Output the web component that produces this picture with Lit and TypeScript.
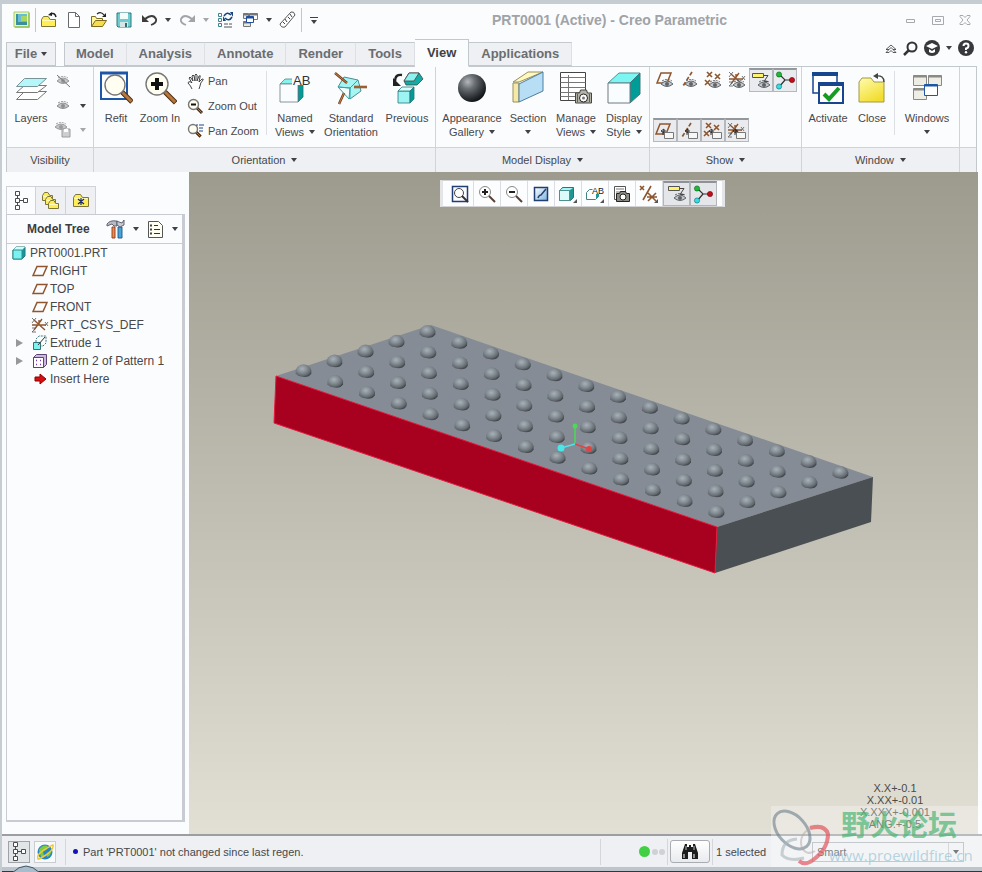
import { LitElement, html, svg, css, nothing, TemplateResult } from "lit";
import { customElement, property, state } from "lit/decorators.js";
import { classMap } from "lit/directives/class-map.js";

type Shape = unknown;
interface Icon { w: number; h: number; body: Shape; }

const icon = (w: number, h: number, body: Shape): Icon => ({ w, h, body });
const draw = (i: Icon) =>
  html`<svg width=${i.w} height=${i.h} viewBox="0 0 ${i.w} ${i.h}" fill="none" aria-hidden="true">${i.body}</svg>`;

const folder = (x: number, y: number, w: number, h: number) => svg`
  <path d="M${x} ${y + h}V${y + 3}l2 -3h${w / 3}l2 3h${w - w / 3 - 4}v${h - 3}z" fill="#ffee55" stroke="#7d7638"/>
  <path d="M${x + 1} ${y + 4}h${w - 2}" stroke="#fffcc0"/>`;
const eye = (x: number, y: number, c = "#606468") => svg`
  <path d="M${x} ${y + 4}q6 -6 12 0q-6 5 -12 0z" fill="#c3c7ca" stroke="${c}"/>
  <circle cx=${x + 6} cy=${y + 4} r="2" fill="${c}"/>
  <path d="M${x + 1} ${y + 1}q5 -3 10 0" stroke="${c}" stroke-dasharray="2 1"/>`;
const brown = "#8e552e";
const plane = svg`<path d="M5 2h10l-4 10H1z" stroke=${brown} stroke-width="1.5"/>`;
const axis = svg`<path d="M12 1L3 15" stroke=${brown} stroke-width="1.7" stroke-dasharray="4 2"/>`;
const points = svg`<path d="M1 9l5 5m0 -5l-5 5M3 1l5 5m0 -5l-5 5M11 3l5 5m0 -5l-5 5" stroke=${brown} stroke-width="1.6"/>`;
const csys = svg`<path d="M1 8h14M3 3l11 10M3 13L11 2M8 8V3" stroke=${brown} stroke-width="1.4"/>
  <path d="M1 1l2 2m2 -2l-4 5M1 11h4l-4 4h4M14 5l3 4m0 -4l-3 4" stroke="#666" stroke-width="0.9"/>`;
const tagBox = svg`<path d="M9.5 10.500h9v6h-9z" fill="#f7f7f7" stroke="#777"/><path d="M8 13V9h3M6 9l3 -2v4z" stroke="#222" stroke-width="0.9"/>`;
const note = svg`<path d="M0.5 1.500h11v4h-11z" fill="#fff36b" stroke="#555"/><path d="M12 3.500h4l-4 6h4" stroke="#444"/>`;
const spin = svg`<path d="M4 3l6 6h8M10 9l-6 7" stroke="#333" stroke-width="1.2"/>
  <circle cx="4" cy="3.5" r="2.6" fill="#1cbb35" stroke="#0b5c1a" stroke-width="0.6"/>
  <circle cx="17" cy="9" r="2.6" fill="#c50d1a" stroke="#650308" stroke-width="0.6"/>
  <circle cx="4" cy="15.5" r="2.6" fill="#35dce2" stroke="#0a6b72" stroke-width="0.6"/>`;
const cube = (x: number, y: number, s: number, d: number) => svg`
  <path d="M${x} ${y + d}l${d} ${-d}h${s}l${-d} ${d}z" fill="#86f3ef" stroke="#4a8c92" stroke-width="0.8"/>
  <path d="M${x + s} ${y + d}l${d} ${-d}v${s}l${-d} ${d}z" fill="#009c98" stroke="#2c6f73" stroke-width="0.8"/>
  <path d="M${x} ${y + d}h${s}v${s}h${-s}z" fill="#fafdff" stroke="#6c7b80" stroke-width="0.8"/>`;
const camera = (x: number, y: number) => svg`
  <path d="M${x} ${y + 3}h4l1 -3h6l1 3h4v10h-16z" fill="#b4b3a8" stroke="#444"/>
  <path d="M${x + 2} ${y + 4}v8M${x + 14} ${y + 4}v8" stroke="#5f5f58"/>
  <circle cx=${x + 8} cy=${y + 8} r="4" fill="#fff" stroke="#222"/><circle cx=${x + 8} cy=${y + 8} r="1.5" fill="#777"/>`;
const lens = (x: number, y: number, r: number, hw: number) => svg`
  <path d="M${x + r * 0.7} ${y + r * 0.7}l${r} ${r}" stroke="#4c2b10" stroke-width=${hw + 1}/>
  <path d="M${x + r * 0.75} ${y + r * 0.75}l${r * 0.9} ${r * 0.9}" stroke="#b8783d" stroke-width=${hw - 1}/>
  <circle cx=${x} cy=${y} r=${r} fill="#fffef0" stroke="#777" stroke-width="1.4"/>`;
const pane = (x: number, y: number, w: number, h: number, c: string, f: string) => svg`
  <path d="M${x} ${y}h${w}v${h}h${-w}z" fill=${f} stroke=${c}/><path d="M${x} ${y + 1}h${w}" stroke=${c} stroke-width="2"/>`;

const I: Record<string, Icon> = {
  logo: icon(18, 18, svg`<path d="M1 1h15v15H1z" fill="#e8f4c8" stroke="#a5cf5a"/><path d="M3 3h11v11H3z" fill="#3a8f9b"/><path d="M5 3h9v8H5z" fill="#67bcd7"/><path d="M8 5h6v5H8z" fill="#a9d65e"/><path d="M16 2v14H2" stroke="#93c25a" stroke-width="1.5"/>`),
  closeFolder: icon(18, 18, svg`${folder(1.5, 5.5, 14, 10)}<path d="M16 6q-1 -5 -6 -3" stroke="#222" stroke-width="1.5"/><path d="M8 4l4 -3v4z" fill="#222"/>`),
  fresh: icon(14, 18, svg`<path d="M1.500 1.500h7l4 4v11h-11z" fill="#fff" stroke="#6a6a6a"/><path d="M8.500 1.500v4h4" stroke="#6a6a6a"/>`),
  open: icon(18, 18, svg`<path d="M1.500 15.500v-10h4l1 2h6v3" fill="#fff6a0" stroke="#7d6a20"/><path d="M1.500 15.500l4 -6h11l-4 6z" fill="#f7dd49" stroke="#7d6a20"/><path d="M7 3q4 -3 7 1" stroke="#222" stroke-width="1.200"/><path d="M16 2v4h-4z" fill="#222"/>`),
  save: icon(16, 16, svg`<path d="M1 1h14v14H2l-1 -1z" fill="#6fcdd0" stroke="#2d7b80"/><path d="M4 1h8v6H4z" fill="#f4fbfb"/><path d="M4 10h8v5H4z" fill="#d6e6e7"/><path d="M9 11h2v4H9z" fill="#2b6f74"/>`),
  undo: icon(17, 12, svg`<path d="M4 5q8 -6 11 0q1 4 -5 6" stroke="#3d3d3d" stroke-width="1.800"/><path d="M1 1v7h7z" fill="#3d3d3d"/>`),
  redo: icon(17, 12, svg`<path d="M13 5q-8 -6 -11 0q-1 4 5 6" stroke="#a2a5a8" stroke-width="1.800"/><path d="M16 1v7H9z" fill="#a2a5a8"/>`),
  regen: icon(17, 18, svg`<path d="M1.500 2.500h3v3h-3zM1.500 7.500h3v3h-3zM1.500 12.500h3v3h-3z" stroke="#3f8490"/><path d="M7 13h4m1 0h3M7 16h8" stroke="#555"/><path d="M7 5q3 -5 7 -1M15 6q-3 5 -7 1" stroke="#17467f" stroke-width="1.600"/><path d="M13 1h3v5zM9 10H6V5z" fill="#17467f"/>`),
  wins: icon(17, 16, svg`${pane(7.5, 1.5, 8, 6, "#777", "#fff")}${pane(1.5, 9.5, 7, 5, "#777", "#e8e8e2")}${pane(1.5, 1.500, 5, 5, "#777", "#e8e8e2")}${pane(4.5, 4.5, 7, 6, "#1f4e9d", "#fff")}`),
  ruler: icon(18, 18, svg`<path d="M1 13L12 1q3 -1 4 3L6 16q-4 1 -5 -3z" fill="#fff" stroke="#555"/><path d="M4 11l2 2M6 8l2 3M9 6l2 2M11 3l2 3" stroke="#444"/>`),
  layers: icon(34, 34, svg`<path d="M2.500 28.500l8 -8h22l-9 8z" fill="#fff" stroke="#777"/><path d="M2.500 21.500l8 -7h22l-9 7z" fill="#fff" stroke="#777"/><path d="M2.500 15.500l8 -8h22l-9 8z" fill="#b5f6fa" stroke="#779599"/>`),
  eyeOff: icon(17, 14, svg`${eye(2, 3, "#94989b")}<path d="M2 1l13 12" stroke="#777"/>`),
  eyeOn: icon(17, 12, eye(2, 2, "#8b8f92")),
  eyeSave: icon(17, 16, svg`${eye(0, 1, "#9a9da0")}<path d="M7 7h8v8H7z" fill="#ccced0" stroke="#9a9da0"/><path d="M9 7h4v3H9z" fill="#fff"/>`),
  refit: icon(34, 34, svg`<path d="M2 2h26v26H2z" fill="#fff" stroke="#1f57a8" stroke-width="2"/><path d="M1 2h28" stroke="#1f57a8" stroke-width="3"/>${lens(16, 14, 10, 4)}`),
  zoomIn: icon(34, 34, svg`${lens(14, 13, 11, 4)}<path d="M14 7v12M8 13h12" stroke="#111" stroke-width="4"/>`),
  pan: icon(17, 17, svg`<path d="M5 16q-1 -3 -4 -6q0 -2 3 -1l1 1L2 5q1 -2 2 0l2 3L5 3q1 -2 2 0l1 5V2q1 -2 2 0v6l2 -5q2 -1 1 1l-1 5l3 -3q2 0 1 1q-3 3 -3 6l-1 3" fill="#fff" stroke="#333" stroke-width="0.9"/>`),
  zoomOut: icon(17, 17, svg`${lens(6.5, 6.5, 5, 2)}<path d="M4 6.500h5" stroke="#111" stroke-width="2"/>`),
  panZoom: icon(17, 17, svg`${lens(6, 6, 4.5, 2)}<path d="M9 2h2m1 0h5M12 5h4M12 8h4" stroke="#234585"/>`),
  named: icon(34, 34, svg`${cube(2, 8, 18, 5)}<path d="M14 3h20v11H14z" fill="#fbfcfe"/><text x="15" y="14" font-size="13" font-family="Liberation Sans, Arial, sans-serif" fill="#333">AB</text>`),
  standard: icon(34, 34, svg`<path d="M4 16l6 -10l14 3l3 11l-11 8z" fill="#a5f5f4" stroke="#4c8c90"/><path d="M4 16l12 1l-1 11z" fill="#f5ffff" stroke="#35a5a5"/><path d="M4 16l12 1l8 -8M16 17v11" stroke="#35a5a5"/><path d="M1 2l12 10M20 16h13M10 22l-5 11" stroke="#77401c" stroke-width="2.500"/><path d="M1 2l12 10M20 16h13M10 22l-5 11" stroke="#c38247" stroke-width="1"/>`),
  previous: icon(34, 34, svg`<path d="M14 10l5 -8h10l4 6l-6 6H16z" fill="#14aaa5" stroke="#444" stroke-width="0.800"/><path d="M14 10l5 -8h10l-5 8z" fill="#8ef2ef" stroke="#444" stroke-width="0.800"/><path d="M8 20h12v12H8z" fill="#9ef4f3" stroke="#27777a" stroke-width="0.800"/><path d="M8 20l4 -4h12l-4 4z" fill="#d6ffff" stroke="#27777a" stroke-width="0.800"/><path d="M20 20l4 -4v12l-4 4z" fill="#009c98" stroke="#27777a" stroke-width="0.800"/><path d="M12 4q-7 -1 -7 6" stroke="#222" stroke-width="2.500"/><path d="M3 7v8h8z" fill="#222"/>`),
  ball: icon(34, 34, svg`<defs><radialGradient id="bg" cx="35%" cy="28%" r="72%"><stop offset="0" stop-color="#b4b8bb"/><stop offset="0.35" stop-color="#6b7075"/><stop offset="0.8" stop-color="#2d3034"/><stop offset="1" stop-color="#151618"/></radialGradient></defs><circle cx="17" cy="17" r="14" fill="url(#bg)"/>`),
  section: icon(34, 34, svg`<path d="M2 11L17 1h15L8 11z" fill="#fff8c0" stroke="#99905a"/><path d="M2 12h6v19H2z" fill="#f6e8a6" stroke="#99905a"/><path d="M8 13L32 1v19L8 31z" fill="#b8def5" stroke="#4a7ea2"/>`),
  manage: icon(34, 34, svg`<path d="M1.500 1.500h25v28h-25z" fill="#fff" stroke="#444"/><path d="M1.500 6.500h25M1.500 11.500h25M1.500 16.500h25M1.500 21.500h25M1.500 25.500h25M9.500 4v25" stroke="#777"/>${camera(16.5, 19)}`),
  display: icon(34, 34, svg`<path d="M1 12l11 -10h21l-10 10z" fill="#7df5f2" stroke="#4d9698"/><path d="M23 12L33 2v21L23 32z" fill="#009c98" stroke="#3f7779"/><path d="M1 12h22v20H1z" fill="#fafdff" stroke="#6c7b80"/>`),
  showPlane: icon(18, 18, svg`${plane}${eye(5, 9)}`),
  showAxis: icon(18, 18, svg`${axis}${eye(5, 9)}`),
  showPoint: icon(18, 18, svg`${points}${eye(5, 10)}`),
  showCsys: icon(18, 18, svg`${csys}${eye(5, 10)}`),
  showNote: icon(18, 18, svg`${note}${eye(6, 9)}`),
  spin: icon(21, 19, spin),
  tagPlane: icon(20, 18, svg`${plane}${tagBox}`),
  tagAxis: icon(20, 18, svg`${axis}${tagBox}`),
  tagPoint: icon(20, 18, svg`${points}${tagBox}`),
  tagCsys: icon(20, 18, svg`${csys}${tagBox}`),
  activate: icon(34, 34, svg`<path d="M2 2h24v20H2z" fill="#fff" stroke="#17468f" stroke-width="1.5"/><path d="M1 3h26" stroke="#17468f" stroke-width="4"/><path d="M8 12h24v20H8z" fill="#fff" stroke="#17468f" stroke-width="2"/><path d="M7 13h26" stroke="#17468f" stroke-width="4"/><path d="M13 23l5 5l10 -11" stroke="#179b25" stroke-width="4"/>`),
  closeBig: icon(34, 34, svg`<defs><linearGradient id="fg" y2="1" x2="0.6"><stop stop-color="#fffcb0"/><stop offset="1" stop-color="#f2dd2e"/></linearGradient></defs><path d="M4 31V11l3 -4h9l3 4h10v20z" fill="url(#fg)" stroke="#a39a45"/><path d="M29 11q0 -7 -8 -6" stroke="#444" stroke-width="1.500"/><path d="M18 5l5 -3v6z" fill="#444"/>`),
  windows: icon(34, 34, svg`${pane(3.5, 4.5, 13, 10, "#8a8a85", "#eeeee4")}${pane(18.5, 4.500, 13, 10, "#8a8a85", "#eeeee4")}${pane(3.5, 17.5, 13, 11, "#8a8a85", "#eeeee4")}${pane(14.5, 13.5, 13, 11, "#1f57a8", "#fff")}`),
  tree: icon(15, 19, svg`<path d="M1.500 0.500h4v4h-4zM1.500 7.500h4v4h-4zM1.500 14.500h4v4h-4zM9.500 7.500h4v4h-4zM5 9.500h4M3.500 4v3M3.500 11v3" fill="#fff" stroke="#4a4c4f"/>`),
  folders: icon(20, 20, svg`${folder(1.5, 1.5, 10, 8)}${folder(4.5, 5.5, 10, 8)}${folder(7.5, 9.5, 10, 8)}`),
  favorites: icon(18, 16, svg`${folder(1.5, 1.5, 15, 12)}<path d="M9 5v7M6 6l6 5M12 6l-6 5" stroke="#1d2b66" stroke-width="1.2"/>`),
  tools: icon(19, 20, svg`<path d="M1 5q3 -4 9 -3h1v5H8L6 5L1 7z" fill="#b4bcc4" stroke="#556" stroke-width="0.9"/><path d="M6 8h3v11H6z" fill="#f08a4b" stroke="#8a3b18" stroke-width="0.9"/><path d="M12 8h4v11h-4z" fill="#4aa2d8" stroke="#1b5688" stroke-width="0.9"/><path d="M11 2v4l3 2l4 -2V1l-2 3l-3 -1z" fill="#c4ccd4" stroke="#556" stroke-width="0.9"/>`),
  list: icon(17, 19, svg`<path d="M1.500 1.500h10l4 4v12h-14z" fill="#fffff4" stroke="#555"/><path d="M7 5.500h4M7 9.500h6M7 13.500h6" stroke="#333"/><path d="M3 5.500h2M3 9.500h2M3 13.500h2" stroke="#444" stroke-width="2"/>`),
  part: icon(14, 14, svg`<path d="M1 4l3 -3h9v9l-3 3H1z" fill="#0c9d99" stroke="#2e7476"/><path d="M1 4l3 -3h9l-3 3z" fill="#cffcfc"/><path d="M1 4h9v9H1z" fill="#7cf2f0" stroke="#2e8c8e"/>`),
  datum: icon(16, 12, svg`<path d="M5 1.500h10l-4 9H1z" stroke=${brown} stroke-width="1.500"/>`),
  csys: icon(18, 16, csys),
  extrude: icon(16, 16, svg`<path d="M1.500 7.500h7v7h-7z" fill="#7cf2f0" stroke="#2e7476"/><path d="M4 7V4l3 -3h7v7L11 11H9" stroke="#3f7a7c" stroke-dasharray="2 1"/><path d="M6 10l7 -8" stroke="#333"/>`),
  pattern: icon(16, 16, svg`<path d="M1.500 4.500l3 -3h10v10l-3 3h-10z" fill="#cbb8e0" stroke="#5b4575"/><path d="M1.500 4.500h10v10h-10z" fill="#fff" stroke="#5b4575"/><path d="M4 7.500h1M8 7.500h1M4 11.500h1M8 11.500h1" stroke="#7b3ab0" stroke-width="1.500"/>`),
  insert: icon(13, 12, svg`<path d="M1 4h5V1l6 5l-6 5V8H1z" fill="#d80d10" stroke="#8f0000"/>`),
  vRefit: icon(18, 18, svg`<path d="M1.500 1.500h15v15h-15z" stroke="#1e3f70" stroke-width="1.500"/><circle cx="8" cy="8" r="4.500" fill="#fff" stroke="#444"/><path d="M11 11l6 6" stroke="#333" stroke-width="2"/>`),
  vIn: icon(18, 18, svg`<circle cx="7" cy="7" r="5.500" fill="#fff" stroke="#888"/><path d="M7 4v6M4 7h6" stroke="#222" stroke-width="2"/><path d="M11 11l6 6" stroke="#5a4032" stroke-width="2"/>`),
  vOut: icon(18, 18, svg`<circle cx="7" cy="7" r="5.500" fill="#fff" stroke="#888"/><path d="M4 7h6" stroke="#222" stroke-width="2"/><path d="M11 11l6 6" stroke="#5a4032" stroke-width="2"/>`),
  vPaint: icon(16, 16, svg`<defs><linearGradient id="pg" x2="1" y2="1"><stop stop-color="#fff"/><stop offset="1" stop-color="#7cb1e4"/></linearGradient></defs><path d="M1.500 1.500h13v13h-13z" fill="url(#pg)" stroke="#1e3f70" stroke-width="1.500"/><path d="M5 12q1 -3 3 -3l5 -6" stroke="#26406a" stroke-width="1.500"/>`),
  vStyle: icon(20, 18, svg`<path d="M1.500 5.500l3 -3h11v10l-3 3h-11z" fill="#239694" stroke="#2e7476"/><path d="M2 5l3 -2h10l-3 2z" fill="#a8f6f4"/><path d="M1.500 5.500h10v10h-10z" fill="#ddfafa" stroke="#4c9092"/><path d="M19 14v4h-4z" fill="#555"/>`),
  vNamed: icon(20, 18, svg`<path d="M1.500 14.500v-7l3 -3h3M1.500 14.500h9l3 -3v-2" stroke="#418486"/><path d="M11 14l3 -3v-2h-3z" fill="#219794"/><text x="7" y="9" font-size="9" font-family="Liberation Sans, Arial, sans-serif" fill="#222">AB</text><path d="M19 14v4h-4z" fill="#555"/>`),
  vManage: icon(18, 18, svg`<path d="M1.500 1.500h11v13h-11z" fill="#fff" stroke="#555"/><path d="M3 4h8M3 7h8" stroke="#777"/><path d="M3.500 8.500h3l1 -2h5l1 2h3v8h-13z" fill="#8c8c85" stroke="#222"/><circle cx="10" cy="12" r="3" fill="#fff" stroke="#222"/>`),
  vDatum: icon(20, 18, svg`<path d="M1 1l4 4m0 -4l-4 4M12 1L4 15M9 8l8 8m0 -8l-8 8M8 12h10" stroke=${brown} stroke-width="1.600"/><path d="M19 14v4h-4z" fill="#555"/>`),
  globe: icon(18, 18, svg`<circle cx="9" cy="9" r="7.500" fill="#2585c7"/><path d="M3 7q3 -6 9 -4l-2 4l-3 1l1 5l-3 1zM11 10l4 -2q0 5 -4 6z" fill="#7bcc42"/><path d="M2 16Q0 12 8 7T17 2Q18 7 10 12T2 16z" stroke="#f0c93a" stroke-width="1.500"/>`),
  find: icon(18, 17, svg`<path d="M4 1h2v3h2V2h2v2h2V1h2l3 9v6h-6V9H7v7H1v-6z" fill="#1c1c1c"/><path d="M3 11v4M13 11v4" stroke="#fff"/><path d="M5 3v4M13 3v4" stroke="#bbb"/>`),
  min: icon(11, 5, svg`<path d="M1.500 1.500h8v3h-8z" stroke="#a6a9ad"/>`),
  max: icon(12, 9, svg`<path d="M0.500 0.500h11v8H0.500zM3.500 3.500h5v2h-5z" stroke="#a6a9ad"/>`),
  close: icon(12, 10, svg`<path d="M1 0.500h3l2 2l2 -2h3v1l-3 3.500l3 3.500v1H8l-2 -2l-2 2H1v-1l3 -3.500l-3 -3.500z" stroke="#a6a9ad"/>`),
  up: icon(12, 9, svg`<path d="M1 5.500l5 -4.500l5 4.500H8l-2 -2l-2 2zM1 8.500l3 -3M11 8.500l-3 -3M1 8.500h3l2 -2l2 2h3" stroke="#333" stroke-width="0.800"/>`),
  search: icon(15, 15, svg`<circle cx="9" cy="6" r="4.500" stroke="#333" stroke-width="2"/><path d="M6 9l-5 5" stroke="#333" stroke-width="2.500"/>`),
  learn: icon(16, 16, svg`<circle cx="8" cy="8" r="8" fill="#37383b"/><path d="M2 6l6 -3l6 3l-6 3zM5 9v3q3 2 6 0V9l-3 2z" fill="#fff"/>`),
  help: icon(16, 16, svg`<circle cx="8" cy="8" r="8" fill="#37383b"/><path d="M5.500 6q0 -2.500 2.500 -2.500t2.500 2.200t-2.500 2.800v1.500" stroke="#fff" stroke-width="2"/><circle cx="8" cy="12.300" r="1.200" fill="#fff"/>`),
};

const base = css`
  * { box-sizing: border-box; }
  svg { display: block; flex: none; }
  button {
    appearance: none; border: 0; margin: 0; padding: 0; background: none; color: inherit;
    font: inherit; display: flex; align-items: center; justify-content: center; cursor: default;
  }
  .caret {
    display: inline-block; width: 0; height: 0; flex: none;
    border: 3px solid transparent; border-top: 4px solid #3f4144; border-bottom: 0;
  }
  .caret.pale { border-top-color: #a5a8ab; }
`;

@customElement("tool-button")
class ToolButton extends LitElement {
  @property() icon = "";
  @property({ attribute: false }) lines: string[] = [];
  @property({ type: Boolean }) menu = false;
  static styles = [base, css`
    :host { display: block; flex: none; }
    button { width: 100%; flex-direction: column; gap: 6px; padding-top: 4px; }
    .label { display: flex; flex-direction: column; align-items: center; line-height: 14px; white-space: nowrap; }
    .line { display: flex; align-items: center; gap: 5px; min-height: 14px; }
  `];
  render(): TemplateResult {
    const last = this.lines.length - 1;
    return html`<button type="button">
      ${draw(I[this.icon])}
      <span class="label">${this.lines.map((t, i) => html`<span class="line">${t}${this.menu && i === last ? html`<i class="caret"></i>` : nothing}</span>`)}</span>
    </button>`;
  }
}

@customElement("model-scene")
class ModelScene extends LitElement {
  static styles = css`
    :host { display: block; }
    svg { display: block; width: 100%; height: 100%; }
  `;
  render() {
    const studs: Array<[number, number]> = [];
    for (let r = 4; r >= 0; r--) {
      for (let c = 0; c < 14; c++) {
        studs.push([303.5 + c * 31.76 + r * 31, 370.5 + c * 10.84 - r * 9.8]);
      }
    }
    return html`<svg viewBox="189 172 789 662" preserveAspectRatio="xMidYMid meet" role="img" aria-label="PRT0001 model">
      <defs>
        <radialGradient id="stud" cx="42%" cy="36%" r="66%">
          <stop offset="0" stop-color="#a9b1b8"/><stop offset="0.45" stop-color="#858d94"/><stop offset="0.8" stop-color="#636a70"/><stop offset="1" stop-color="#40464b"/>
        </radialGradient>
      </defs>
      <path d="M276 376L431 325L873 477L717 527Z" fill="#858c95"/>
      <path d="M717 527L873 477L871 522L715 573Z" fill="#4a4f54"/>
      <path d="M276 376L717 527L715 573L274 423Z" fill="#a8001f"/>
      <path d="M276 376L717 527L715 573L274 423Z" stroke="#e51b3e" stroke-width="1" fill="none"/>
      ${studs.map(([x, y]) => svg`<path d="M${x - 7.8} ${y + 3}A8 7.600 0 1 1 ${x + 7.8} ${y + 3}Q${x + 6} ${y + 6.5} ${x + 1} ${y + 6.5}Q${x - 6} ${y + 6} ${x - 7.8} ${y + 3}Z" fill="url(#stud)"/>`)}
      <path d="M575 444V425" stroke="#4bd957" stroke-width="1.500"/><circle cx="575" cy="426" r="2.500" fill="#4bd957"/>
      <path d="M575 444L589 449" stroke="#e04545" stroke-width="1.500"/><circle cx="589" cy="449" r="3" fill="#e04545"/>
      <path d="M575 444L561 448" stroke="#4be5ea" stroke-width="1.500"/><circle cx="561" cy="448" r="3.500" fill="#4be5ea"/>
    </svg>`;
  }
}

const TABS = ["Model", "Analysis", "Annotate", "Render", "Tools", "View", "Applications"];
const TREE: Array<{ icon: string; text: string; root?: boolean; fold?: boolean }> = [
  { icon: "part", text: "PRT0001.PRT", root: true },
  { icon: "datum", text: "RIGHT" },
  { icon: "datum", text: "TOP" },
  { icon: "datum", text: "FRONT" },
  { icon: "csys", text: "PRT_CSYS_DEF" },
  { icon: "extrude", text: "Extrude 1", fold: true },
  { icon: "pattern", text: "Pattern 2 of Pattern 1", fold: true },
  { icon: "insert", text: "Insert Here" },
];
const VIEWBAR = ["vRefit", "vIn", "vOut", "vPaint", "vStyle", "vNamed", "vManage", "vDatum", "showNote", "spin"];

@customElement("app-root")
class AppRoot extends LitElement {
  @state() private tab = "View";

  static styles = [base, css`
    :host {
      display: flex; flex-direction: column; position: relative; box-sizing: border-box; min-height: 100vh; overflow: hidden;
      background: #fbfcfe; color: #46484b;
      border-top: 4px solid #c5cdd3; border-left: 2px solid #c5cdd3;
      font: 11px/14px "Liberation Sans", Arial, sans-serif;
    }
    .titlebar { display: flex; align-items: center; height: 35px; padding: 0 4px 3px 8px; }
    .quick { display: flex; align-items: center; gap: 1px; }
    .quick button { width: 24px; height: 24px; }
    .quick .drop { width: 12px; }
    .quick .custom { width: 16px; margin-left: 3px; }
    .vline { width: 1px; height: 24px; background: #c3c7cb; flex: none; }
    .more { display: flex; flex-direction: column; align-items: center; width: 8px; border-top: 1px solid #3f4144; padding-top: 2px; }
    h1 { flex: 1; margin: 0; text-align: center; font-size: 14px; line-height: 16px; color: #a0a3a7; white-space: nowrap; }
    .winbtns { display: flex; }
    .winbtns button { width: 27px; height: 20px; }
    .tabrow { display: flex; align-items: flex-end; height: 27px; padding: 0 4px; font-weight: bold; font-size: 13px; line-height: 16px; color: #6a6d70; }
    .file { height: 24px; width: 50px; gap: 4px; background: #eef0f3; border: 1px solid #c3c8cd; margin-right: 8px; }
    .tabs { display: flex; align-items: flex-end; }
    .tabs button { height: 24px; padding: 0 12px; background: #eef0f3; border: 1px solid #c3c8cd; border-right-color: #dcdfe3; border-left: 0; }
    .tabs button:first-child { padding-left: 11px; border-left: 1px solid #c3c8cd; }
    .tabs .on { height: 28px; margin-bottom: -1px; z-index: 1; background: #fbfcfe; border-color: #c3c8cd; border-bottom-color: #fbfcfe; color: #3f4245; }
    .aids { display: flex; align-items: center; align-self: flex-start; margin-left: auto; gap: 6px; padding-right: 4px; }
    .aids button { height: 18px; }

    .ribbon { display: flex; margin: 0 5px 0 4px; height: 106px; border: 1px solid #c3c8cd; border-bottom: 0; }
    .group { display: flex; flex-direction: column; border-right: 1px solid #cfd4d9; }
    .group.rest { flex: 1; border-right: 0; }
    .body { display: flex; height: 80px; }
    .cap { flex: 1; display: flex; align-items: center; justify-content: center; gap: 6px; border-top: 1px solid #cfd4d9; background: #eef0f3; }
    .split { width: 1px; margin: 4px 0 12px; background: #dcdfe4; flex: none; }
    .w44 { width: 44px; } .w48 { width: 48px; } .w56 { width: 56px; } .w64 { width: 64px; }
    .stack { display: flex; flex-direction: column; justify-content: space-between; padding: 4px 0 6px; }
    .stack button { height: 20px; gap: 4px; justify-content: flex-start; white-space: nowrap; }
    .eyes { width: 38px; padding: 3px 0 6px; }
    .eyes button { height: 22px; gap: 8px; }
    .moves { width: 84px; padding-left: 5px; }
    .show .body { flex-direction: column; justify-content: space-between; padding: 1px 4px 5px 3px; }
    .row { display: flex; }
    .row button { width: 24px; height: 24px; }
    .row .held { background: #e9ebee; border: 1px solid #b5b8bc; border-top: 2px solid #94979b; }
    .display .body { padding: 0 3px 0 4px; gap: 2px; }
    .windows .body { padding-left: 4px; }

    .main { flex: 1; display: flex; min-height: 0; padding-right: 4px; }
    .side { width: 187px; flex: none; display: flex; flex-direction: column; padding: 14px 4px 12px; }
    .sidetabs { display: flex; position: relative; z-index: 1; }
    .sidetabs button { width: 30px; height: 28px; background: #eef0f3; border: 1px solid #cfd3d7; border-left: 0; border-bottom: 0; }
    .sidetabs .on { background: #fbfcfe; border-left: 1px solid #cfd3d7; }
    .panel { flex: 1; border: 1px solid #c8cbd2; border-right: 3px solid #c8cbd2; border-bottom: 2px solid #c8cbd2; }
    .phead { display: flex; align-items: center; height: 29px; padding: 0 4px 0 20px; border-bottom: 1px solid #c8cbd2; }
    .phead h2 { margin: 0; font-size: 12px; line-height: 14px; color: #3c3e41; flex: 1; white-space: nowrap; }
    .phead button { gap: 8px; margin-right: 8px; }
    .phead button:last-child { margin-right: 0; }
    ul { list-style: none; margin: 0; padding: 0; font-size: 12px; line-height: 18px; }
    li { display: flex; align-items: center; height: 18px; white-space: nowrap; padding-left: 9px; }
    li .fold { width: 14px; flex: none; }
    li .tri { display: block; width: 0; height: 0; border: 4px solid transparent; border-left: 7px solid #96999c; border-right: 0; }
    li .ic { width: 20px; display: flex; justify-content: center; flex: none; }
    li.root { padding-left: 4px; }
    li.root .ic { width: 15px; margin-right: 4px; }

    .view { flex: 1; min-width: 0; display: grid; background: linear-gradient(#9d9b8e, #e2dfd5); }
    .view > * { grid-area: 1 / 1; }
    .viewbar { justify-self: center; align-self: start; display: flex; margin: 8px 2px 0 0; padding: 0 5px 0 4px; height: 27px; background: #fcfdff; border: 1px solid #d2d3d2; border-left: 3px solid #e4e5e6; border-right: 3px solid #e4e5e6; }
    .viewbar button { width: 27px; height: 25px; border-right: 1px solid #dadde1; }
    .viewbar .held { background: #e4e6ea; border: 1px solid #b2b5ba; border-top: 2px solid #8f9296; }
    .tol { justify-self: end; align-self: end; margin: 0 48px 4px 0; text-align: center; line-height: 12px; color: #4a4b46; }

    .status { display: flex; align-items: center; height: 33px; border-top: 2px solid #9c9ea1; background: #eef0f3; padding: 0 18px 0 6px; }
    .status .sq { width: 22px; height: 22px; border: 1px solid #c9cdd1; background: #f8f9fb; margin-right: 4px; }
    .status .sq.on { background: #e2e5e8; border-color: #9fa3a8; }
    .status .vline { height: 26px; background: #d3d7db; }
    .dot { width: 5px; height: 5px; border-radius: 50%; background: #1414b4; margin: 0 5px 0 7px; }
    .msg { flex: 1; padding-left: 0; }
    .lead { margin-left: 5px; }
    .leds { display: flex; align-items: center; gap: 1px; padding: 0 2px 0 4px; margin-left: 34px; }
    .led { width: 6px; height: 6px; border-radius: 50%; background: #cfd1d5; }
    .led.go { width: 11px; height: 11px; background: #43cf45; margin-right: 1px; }
    .find { width: 40px; height: 23px; border: 1px solid #a9acb0; border-radius: 3px; background: linear-gradient(#fff, #e8eaed); margin: 0 2px; }
    .count { width: 99px; padding-left: 3px; }
    .pick { display: grid; width: 152px; height: 20px; border: 1px solid #aeb2b7; align-items: center; }
    .pick > * { grid-area: 1 / 1; }
    select { appearance: none; width: 100%; height: 18px; border: 0; margin: 0; padding: 0 18px 0 4px; background: none; color: inherit; font: inherit; }
    .arrow { justify-self: end; width: 15px; height: 18px; display: flex; align-items: center; justify-content: center; border-left: 1px solid #c4c7cb; pointer-events: none; }
    .edge { height: 4px; background: #bcc5cb; }
    .task { height: 2px; background: #2c3740; }
    .orb { position: absolute; left: 8px; bottom: 0; }
    .mark { position: absolute; right: 0; bottom: 6px; height: 61px; width: 211px; display: flex; background: rgba(255, 255, 255, 0.3); pointer-events: none; }
    .mark .words { display: flex; flex-direction: column; margin-left: -2px; white-space: nowrap; }
    .zh { margin-left: 12px; font: bold 29px/40px "Liberation Sans", "Noto Sans CJK SC", sans-serif; color: rgba(68, 180, 112, 0.68); }
    .url { font: 15px/18px "Open Sans", "Liberation Sans", sans-serif; color: rgba(150, 196, 212, 0.7); }
  `];

  private small(name: string, label: string, held = false) {
    return html`<button type="button" class=${classMap({ held })} aria-label=${label}>${draw(I[name])}</button>`;
  }
  private drop(pale = false) {
    return html`<button type="button" class="drop" aria-label="More"><i class=${classMap({ caret: true, pale })}></i></button>`;
  }

  render() {
    return html`
      <header>
        <div class="titlebar">
          <div class="quick">
            ${this.small("logo", "Creo")}<span class="vline"></span>
            ${this.small("closeFolder", "Close window")}${this.small("fresh", "New")}${this.small("open", "Open")}${this.small("save", "Save")}
            ${this.small("undo", "Undo")}${this.drop()}${this.small("redo", "Redo")}${this.drop(true)}
            ${this.small("regen", "Regenerate")}${this.small("wins", "Windows")}${this.drop()}${this.small("ruler", "Measure")}
            <span class="vline"></span>
            <button type="button" class="custom" aria-label="Customize"><span class="more"><i class="caret"></i></span></button>
          </div>
          <h1>PRT0001 (Active) - Creo Parametric</h1>
          <div class="winbtns">${this.small("min", "Minimize")}${this.small("max", "Maximize")}${this.small("close", "Close")}</div>
        </div>
        <nav class="tabrow">
          <button type="button" class="file">File<i class="caret"></i></button>
          <div class="tabs">
            ${TABS.map(t => html`<button type="button" class=${classMap({ on: t === this.tab })} @click=${() => (this.tab = t)}>${t}</button>`)}
          </div>
          <div class="aids">
            ${this.small("up", "Minimize ribbon")}${this.small("search", "Search")}${this.small("learn", "Learning")}${this.drop()}${this.small("help", "Help")}
          </div>
        </nav>
      </header>

      <section class="ribbon" aria-label="View ribbon">
        <div class="group">
          <div class="body">
            <tool-button class="w48" icon="layers" .lines=${["Layers"]}></tool-button>
            <div class="stack eyes">
              <button type="button" aria-label="Hide">${draw(I.eyeOff)}</button>
              <button type="button" aria-label="Show">${draw(I.eyeOn)}<i class="caret"></i></button>
              <button type="button" aria-label="Save status">${draw(I.eyeSave)}<i class="caret pale"></i></button>
            </div>
          </div>
          <div class="cap">Visibility</div>
        </div>
        <div class="group orient">
          <div class="body">
            <tool-button class="w44" icon="refit" .lines=${["Refit"]}></tool-button>
            <tool-button class="w44" icon="zoomIn" .lines=${["Zoom In"]}></tool-button>
            <div class="stack moves">
              <button type="button">${draw(I.pan)}Pan</button>
              <button type="button">${draw(I.zoomOut)}Zoom Out</button>
              <button type="button">${draw(I.panZoom)}Pan Zoom</button>
            </div>
            <span class="split"></span>
            <tool-button class="w56" icon="named" .lines=${["Named", "Views"]} menu></tool-button>
            <tool-button class="w56" icon="standard" .lines=${["Standard", "Orientation"]}></tool-button>
            <tool-button class="w56" icon="previous" .lines=${["Previous"]}></tool-button>
          </div>
          <div class="cap">Orientation<i class="caret"></i></div>
        </div>
        <div class="group display">
          <div class="body">
            <tool-button class="w64" icon="ball" .lines=${["Appearance", "Gallery"]} menu></tool-button>
            <tool-button class="w44" icon="section" .lines=${["Section", ""]} menu></tool-button>
            <tool-button class="w48" icon="manage" .lines=${["Manage", "Views"]} menu></tool-button>
            <tool-button class="w44" icon="display" .lines=${["Display", "Style"]} menu></tool-button>
          </div>
          <div class="cap">Model Display<i class="caret"></i></div>
        </div>
        <div class="group show">
          <div class="body">
            <div class="row">
              ${this.small("showPlane", "Plane display")}${this.small("showAxis", "Axis display")}${this.small("showPoint", "Point display")}
              ${this.small("showCsys", "Csys display")}${this.small("showNote", "Annotation display", true)}${this.small("spin", "Spin center", true)}
            </div>
            <div class="row">
              ${this.small("tagPlane", "Plane tags", true)}${this.small("tagAxis", "Axis tags", true)}${this.small("tagPoint", "Point tags", true)}${this.small("tagCsys", "Csys tags", true)}
            </div>
          </div>
          <div class="cap">Show<i class="caret"></i></div>
        </div>
        <div class="group windows">
          <div class="body">
            <tool-button class="w44" icon="activate" .lines=${["Activate"]}></tool-button>
            <tool-button class="w44" icon="closeBig" .lines=${["Close"]}></tool-button>
            <span class="split"></span>
            <tool-button class="w64" icon="windows" .lines=${["Windows", ""]} menu></tool-button>
          </div>
          <div class="cap">Window<i class="caret"></i></div>
        </div>
        <div class="group rest"><div class="body"></div><div class="cap"></div></div>
      </section>

      <main class="main">
        <aside class="side">
          <div class="sidetabs">
            <button type="button" class="on" aria-label="Model tree">${draw(I.tree)}</button>
            <button type="button" aria-label="Folders">${draw(I.folders)}</button>
            <button type="button" aria-label="Favorites">${draw(I.favorites)}</button>
          </div>
          <div class="panel">
            <div class="phead">
              <h2>Model Tree</h2>
              <button type="button" aria-label="Settings">${draw(I.tools)}<i class="caret"></i></button>
              <button type="button" aria-label="Show">${draw(I.list)}<i class="caret"></i></button>
            </div>
            <ul>
              ${TREE.map(n => html`<li class=${classMap({ root: !!n.root })}>
                ${n.root ? nothing : html`<span class="fold">${n.fold ? html`<i class="tri"></i>` : nothing}</span>`}
                <span class="ic">${draw(I[n.icon])}</span>${n.text}</li>`)}
            </ul>
          </div>
        </aside>
        <section class="view">
          <model-scene></model-scene>
          <div class="viewbar">${VIEWBAR.map((v, i) => this.small(v, v, i > 7))}</div>
          <div class="tol">X.X+-0.1<br>X.XX+-0.01<br>X.XXX+-0.001<br>ANG.+-0.5</div>
        </section>
      </main>

      <footer>
        <div class="status">
          <button type="button" class="sq on" aria-label="Toggle tree">${draw(I.tree)}</button>
          <button type="button" class="sq" aria-label="Toggle browser">${draw(I.globe)}</button>
          <span class="vline lead"></span>
          <span class="dot"></span><span class="msg">Part 'PRT0001' not changed since last regen.</span>
          <span class="vline"></span>
          <span class="leds"><i class="led go"></i><i class="led"></i><i class="led"></i></span>
          <span class="vline"></span>
          <button type="button" class="find" aria-label="Find">${draw(I.find)}</button>
          <span class="vline"></span>
          <span class="count">1 selected</span>
          <label class="pick"><select aria-label="Selection filter"><option>Smart</option><option>Geometry</option></select><span class="arrow"><i class="caret"></i></span></label>
        </div>
        <div class="edge"></div>
        <div class="task"></div>
      </footer>
      <svg class="orb" width="32" height="8" viewBox="0 0 32 8" aria-hidden="true"><path d="M2 8Q16 -6 30 8z" fill="#a9bccb" stroke="#3f5568"/></svg>
      <div class="mark">
        <svg width="60" height="61" viewBox="0 0 60 61" fill="none" aria-hidden="true">
          <ellipse cx="21" cy="24" rx="22" ry="14" transform="rotate(48 21 24)" stroke="#6c7f8a" stroke-opacity="0.6" stroke-width="3"/>
          <path d="M33 52Q18 56 11 49Q11 34 26 33" stroke="#a9b4bb" stroke-opacity="0.6" stroke-width="3"/>
          <path d="M39 22Q54 18 57 28Q57 43 42 54Q34 60 28 55" stroke="#e0565e" stroke-opacity="0.7" stroke-width="4"/>
          <path d="M39 22Q27 30 31 42Q36 50 44 45" stroke="#b5a5aa" stroke-opacity="0.5" stroke-width="2"/>
        </svg>
        <div class="words"><span class="zh">野火论坛</span><span class="url">www.proewildfire.cn</span></div>
      </div>
    `;
  }
}
